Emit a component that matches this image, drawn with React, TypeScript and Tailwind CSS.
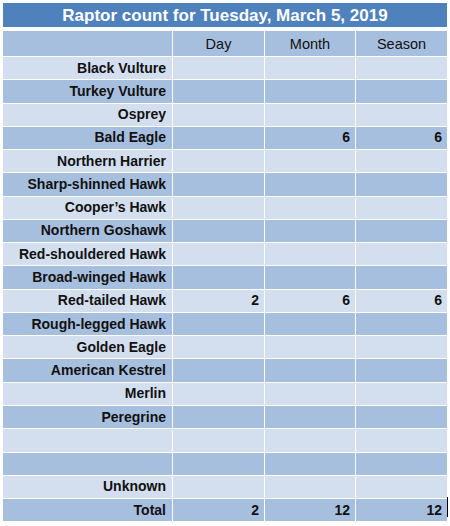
const birds: { name: string; day?: string; month?: string; season?: string }[] = [
  { name: "Black Vulture" },
  { name: "Turkey Vulture" },
  { name: "Osprey" },
  { name: "Bald Eagle", month: "6", season: "6" },
  { name: "Northern Harrier" },
  { name: "Sharp-shinned Hawk" },
  { name: "Cooper’s Hawk" },
  { name: "Northern Goshawk" },
  { name: "Red-shouldered Hawk" },
  { name: "Broad-winged Hawk" },
  { name: "Red-tailed Hawk", day: "2", month: "6", season: "6" },
  { name: "Rough-legged Hawk" },
  { name: "Golden Eagle" },
  { name: "American Kestrel" },
  { name: "Merlin" },
  { name: "Peregrine" },
  { name: "" },
  { name: "" },
  { name: "Unknown" },
  { name: "Total", day: "2", month: "12", season: "12" },
];

export default function App() {
  return (
    <div
      className="w-[450px] h-[526px] bg-white pl-[3px] pt-[3px] text-[#111]"
      style={{ fontFamily: '"Liberation Sans", Arial, sans-serif' }}
    >
      <div className="w-[444px] h-[24px] bg-[#4f81bd] flex items-center justify-center text-white font-bold text-[17px] leading-none">
        Raptor count for Tuesday, March 5, 2019
      </div>

      <div className="relative mt-[4px] w-[444px] grid grid-cols-[169px_91px_90px_91px] gap-px bg-white">
        {/* header row */}
        <div className="h-[25px] bg-[#a7bfde]" />
        {["Day", "Month", "Season"].map((h) => (
          <div key={h} className="h-[25px] bg-[#a7bfde] flex items-center justify-center text-[14.5px] pt-[2px]">
            {h}
          </div>
        ))}

        {birds.map((b, i) => {
          const bg = i % 2 === 0 ? "bg-[#d3dfee]" : "bg-[#a7bfde]";
          const h = i === birds.length - 1 ? "h-[22px]" : "h-[22.28px]";
          return [
            <div key={`n${i}`} className={`${bg} ${h} flex items-center justify-end pr-[6px] font-bold text-[14px]`}>
              {b.name}
            </div>,
            ...[b.day, b.month, b.season].map((v, j) => (
              <div key={`v${i}-${j}`} className={`${bg} ${h} flex items-center justify-end pr-[5px] font-bold text-[14px]`}>
                {v}
              </div>
            )),
          ];
        })}

        {/* text cursor after the last total */}
        <div className="absolute right-[-1px] bottom-[4px] w-px h-[20px] bg-black" />
      </div>
    </div>
  );
}
